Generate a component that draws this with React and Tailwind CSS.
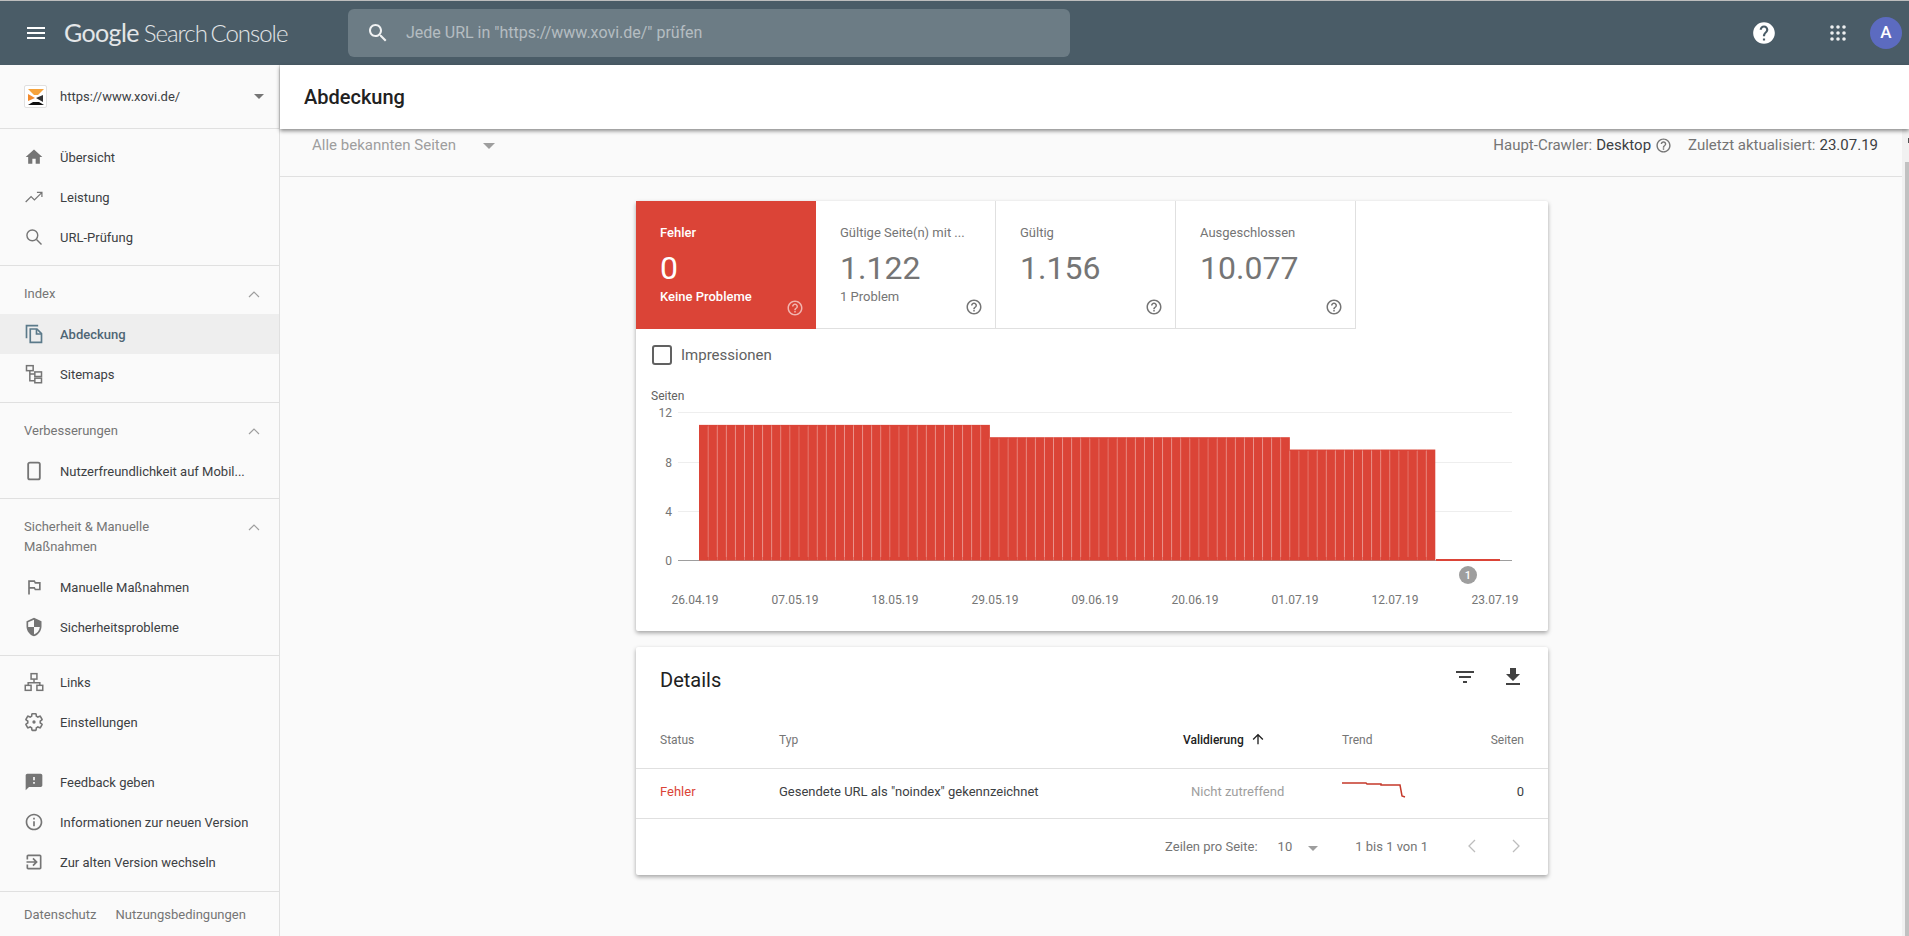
import React from "react";

const Icon = ({ d, className = "w-5 h-5", children }) => (
  <svg viewBox="0 0 24 24" fill="currentColor" className={className}>
    {d && <path d={d} />}
    {children}
  </svg>
);

const paths = {
  menu: "M3 18h18v-2H3v2zm0-5h18v-2H3v2zm0-7v2h18V6H3z",
  search:
    "M15.5 14h-.79l-.28-.27C15.41 12.59 16 11.11 16 9.5 16 5.91 13.09 3 9.5 3S3 5.91 3 9.5 5.91 16 9.5 16c1.61 0 3.09-.59 4.23-1.57l.27.28v.79l5 4.99L20.49 19l-4.99-5zm-6 0C7.01 14 5 11.99 5 9.5S7.01 5 9.5 5 14 7.01 14 9.5 11.99 14 9.5 14z",
  home: "M10 20v-6h4v6h5v-8h3L12 3 2 12h3v8z",
  help: "M12 2C6.48 2 2 6.48 2 12s4.48 10 10 10 10-4.48 10-10S17.52 2 12 2zm1 17h-2v-2h2v2zm2.07-7.75l-.9.92C13.45 12.9 13 13.5 13 15h-2v-.5c0-1.1.45-2.1 1.17-2.83l1.24-1.26c.37-.36.59-.86.59-1.41 0-1.1-.9-2-2-2s-2 .9-2 2H8c0-2.21 1.79-4 4-4s4 1.79 4 4c0 .88-.36 1.68-.93 2.25z",
  helpOutline:
    "M11 18h2v-2h-2v2zm1-16C6.48 2 2 6.48 2 12s4.48 10 10 10 10-4.48 10-10S17.52 2 12 2zm0 18c-4.41 0-8-3.59-8-8s3.59-8 8-8 8 3.59 8 8-3.59 8-8 8zm0-14c-2.21 0-4 1.79-4 4h2c0-1.1.9-2 2-2s2 .9 2 2c0 2-3 1.75-3 5h2c0-2.25 3-2.5 3-5 0-2.21-1.79-4-4-4z",
  flag: "M14 6l-1-2H5v17h2v-7h5l1 2h7V6h-6zm4 8h-4l-1-2H7V6h5l1 2h5v6z",
  shield:
    "M12 1L3 5v6c0 5.55 3.84 10.74 9 12 5.16-1.26 9-6.45 9-12V5l-9-4zm0 10.99h7c-.53 4.12-3.28 7.79-7 8.94V12H5V6.3l7-3.11v8.8z",
  feedback:
    "M20 2H4c-1.1 0-1.99.9-1.99 2L2 22l4-4h14c1.1 0 2-.9 2-2V4c0-1.1-.9-2-2-2zm-7 12h-2v-2h2v2zm0-4h-2V6h2v4z",
  info: "M11 7h2v2h-2zm0 4h2v6h-2zm1-9C6.48 2 2 6.48 2 12s4.48 10 10 10 10-4.48 10-10S17.52 2 12 2zm0 18c-4.41 0-8-3.59-8-8s3.59-8 8-8 8 3.59 8 8-3.59 8-8 8z",
  exit: "M10.09 15.59L11.5 17l5-5-5-5-1.41 1.41L12.67 11H3v2h9.67l-2.58 2.59zM19 3H5c-1.11 0-2 .9-2 2v4h2V5h14v14H5v-4H3v4c0 1.1.89 2 2 2h14c1.1 0 2-.9 2-2V5c0-1.1-.9-2-2-2z",
  filter: "M10 18h4v-2h-4v2zM3 6v2h18V6H3zm3 7h12v-2H6v2z",
  download: "M19 9h-4V3H9v6H5l7 7 7-7zM5 18v2h14v-2H5z",
  up: "M4 12l1.41 1.41L11 7.83V20h2V7.83l5.58 5.59L20 12l-8-8-8 8z",
};

const Trending = () => (
  <svg viewBox="0 0 24 24" fill="none" stroke="currentColor" strokeWidth="1.5" className="w-5 h-5">
    <path d="M2 18l6.5-6.5 4 4L21 7M15.5 6.5H21.5V12" />
  </svg>
);
const Loupe = () => (
  <svg viewBox="0 0 24 24" fill="none" stroke="currentColor" strokeWidth="1.7" className="w-5 h-5">
    <circle cx="10" cy="10" r="6.5" />
    <path d="M15 15l6 6" />
  </svg>
);
const Pages = () => (
  <svg viewBox="0 0 24 24" fill="none" stroke="currentColor" strokeWidth="2" className="w-5 h-5">
    <path d="M17 2H3v15" />
    <path d="M7.5 6h8l5.5 5.5V22H7.5z" />
    <path d="M15 6v6h6" />
  </svg>
);
const Sitemap = () => (
  <svg viewBox="0 0 24 24" fill="none" stroke="currentColor" strokeWidth="1.8" className="w-5 h-5">
    <rect x="3" y="2" width="8" height="6" />
    <rect x="13" y="9.5" width="8" height="5.5" />
    <rect x="13" y="17" width="8" height="5.5" />
    <path d="M7 8v12h6M7 12h6" />
  </svg>
);
const Phone = () => (
  <svg viewBox="0 0 24 24" fill="none" stroke="currentColor" strokeWidth="2.2" className="w-5 h-5">
    <rect x="5" y="2" width="14" height="20" rx="2" />
  </svg>
);
const Links = () => (
  <svg viewBox="0 0 24 24" fill="none" stroke="currentColor" strokeWidth="1.8" className="w-5 h-5">
    <rect x="8.5" y="2" width="7" height="6.5" />
    <rect x="1.5" y="16" width="7" height="6" />
    <rect x="15.5" y="16" width="7" height="6" />
    <path d="M12 8.5V13M5 16v-3h14v3" />
  </svg>
);
const Gear = () => (
  <svg viewBox="0 0 24 24" fill="none" stroke="currentColor" strokeWidth="1.9" className="w-5 h-5">
    <path d="M19.43 12.98c.04-.32.07-.64.07-.98s-.03-.66-.07-.98l2.11-1.65c.19-.15.24-.42.12-.64l-2-3.46c-.12-.22-.39-.3-.61-.22l-2.49 1c-.52-.4-1.08-.73-1.69-.98l-.38-2.65C14.46 2.18 14.25 2 14 2h-4c-.25 0-.46.18-.49.42l-.38 2.65c-.61.25-1.17.59-1.69.98l-2.49-1c-.23-.09-.49 0-.61.22l-2 3.46c-.13.22-.07.49.12.64l2.11 1.65c-.04.32-.07.65-.07.98s.03.66.07.98l-2.11 1.65c-.19.15-.24.42-.12.64l2 3.46c.12.22.39.3.61.22l2.49-1c.52.4 1.08.73 1.69.98l.38 2.65c.03.24.24.42.49.42h4c.25 0 .46-.18.49-.42l.38-2.65c.61-.25 1.17-.59 1.69-.98l2.49 1c.23.09.49 0 .61-.22l2-3.46c.12-.22.07-.49-.12-.64l-2.11-1.65z" />
    <circle cx="12" cy="12" r="2" fill="currentColor" stroke="none" />
  </svg>
);

const Caret = ({ className = "" }) => (
  <span className={`w-0 h-0 border-x-[5px] border-x-transparent border-t-[5px] border-t-[#757575] ${className}`}></span>
);

const ChevronUp = () => (
  <svg viewBox="0 0 14 8" fill="none" stroke="#9e9e9e" strokeWidth="1.2" className="w-[14px] h-2 ml-auto mr-[18px] mt-[6px] shrink-0">
    <path d="M2 7l5-5 5 5" />
  </svg>
);

const NavItem = ({ icon, label, active }) => (
  <div
    className={`flex items-center h-10 text-[13px] ${
      active ? "bg-[#eeeeee] text-[#4f6675] font-medium" : "text-[#3c4043]"
    }`}
  >
    <span className={`w-[60px] pl-6 flex shrink-0 ${active ? "text-[#5b7a8a]" : "text-[#757575]"}`}>{icon}</span>
    <span className="truncate pt-px">{label}</span>
  </div>
);

const SectionHead = ({ label }) => (
  <div className="flex items-start pl-6 pt-[18px] pb-[10px] text-[13px] leading-5 text-[#757575]">
    <span className="w-[190px]">{label}</span>
    <ChevronUp />
  </div>
);

const Sidebar = () => (
  <aside className="w-[280px] shrink-0 border-r border-[#e0e0e0] flex flex-col bg-[#fafafa]">
    <div className="h-[64px] flex items-center pl-6 pr-[15px] border-b border-[#e0e0e0]">
      <span className="w-[23px] h-[23px] bg-white border border-[#e0e0e0] rounded-[2px] flex items-center justify-center">
        <svg viewBox="0 0 18 18" className="w-[18px] h-[18px]">
          <path d="M1 1h16l-6 6H7z" fill="#f5a33c" />
          <path d="M1 6l7 4-7 3z" fill="#f28a2c" />
          <path d="M16 7v7l-7-4z" fill="#333" />
          <path d="M1 17l5-3h6l5 3z" fill="#111" />
        </svg>
      </span>
      <span className="ml-[13px] text-[13px] text-[#3c4043]">https://www.xovi.de/</span>
      <Caret className="ml-auto" />
    </div>

    <div className="py-2 border-b border-[#e0e0e0]">
      <NavItem label="Übersicht" icon={<Icon d={paths.home} />} />
      <NavItem label="Leistung" icon={<Trending />} />
      <NavItem label="URL-Prüfung" icon={<Loupe />} />
    </div>

    <div className="pb-2 border-b border-[#e0e0e0]">
      <SectionHead label="Index" />
      <NavItem active label="Abdeckung" icon={<Pages />} />
      <NavItem label="Sitemaps" icon={<Sitemap />} />
    </div>

    <div className="pb-[7px] border-b border-[#e0e0e0]">
      <SectionHead label="Verbesserungen" />
      <NavItem label="Nutzerfreundlichkeit auf Mobil..." icon={<Phone />} />
    </div>

    <div className="pb-2 border-b border-[#e0e0e0]">
      <SectionHead label="Sicherheit & Manuelle Maßnahmen" />
      <NavItem label="Manuelle Maßnahmen" icon={<Icon d={paths.flag} />} />
      <NavItem label="Sicherheitsprobleme" icon={<Icon d={paths.shield} />} />
    </div>

    <div className="pt-[6px] pb-[9px] border-b border-[#e0e0e0]">
      <NavItem label="Links" icon={<Links />} />
      <NavItem label="Einstellungen" icon={<Gear />} />
      <div className="h-5"></div>
      <NavItem label="Feedback geben" icon={<Icon d={paths.feedback} />} />
      <NavItem label="Informationen zur neuen Version" icon={<Icon d={paths.info} />} />
      <NavItem label="Zur alten Version wechseln" icon={<Icon d={paths.exit} />} />
    </div>

    <div className="flex gap-[19px] pl-6 pt-[13px] text-[13px] leading-5 text-[#757575]">
      <span>Datenschutz</span>
      <span>Nutzungsbedingungen</span>
    </div>
  </aside>
);

const Tile = ({ label, value, sub, active }) => (
  <div
    className={`relative w-[180px] h-[128px] pl-6 pt-[22px] ${
      active ? "bg-[#db4437] text-white" : "border-r border-b border-[#e0e0e0] text-[#757575]"
    }`}
  >
    <div className={`text-[13px] leading-5 ${active ? "font-medium" : ""}`}>{label}</div>
    <div className="mt-[5px] text-[32px] leading-10">{value}</div>
    <div className={`text-[13px] leading-[18px] ${active ? "font-medium" : ""}`}>{sub}</div>
    <span className={`absolute right-[12px] bottom-[12px] ${active ? "text-white/60" : "text-[#757575]"}`}>
      <Icon d={paths.helpOutline} className="w-[18px] h-[18px]" />
    </span>
  </div>
);

// 88 daily bars, pitch taken from the tick labels
const PITCH = 9.09;
const bars = Array.from({ length: 88 }, (_, i) => (i < 32 ? 11 : i < 65 ? 10 : i < 81 ? 9 : 0));
const ticks = ["26.04.19", "07.05.19", "18.05.19", "29.05.19", "09.06.19", "20.06.19", "01.07.19", "12.07.19", "23.07.19"];
const yAxis = [
  [12, 31],
  [8, 81],
  [4, 130],
  [0, 179],
];

const Chart = () => (
  <svg viewBox="0 0 912 250" className="block w-[912px] h-[250px]" fontFamily="Roboto, sans-serif">
    <text x="15" y="19" fontSize="12" fill="#616161">Seiten</text>
    {yAxis.map(([v, y]) => (
      <g key={v}>
        <line x1="42" x2="876" y1={y + 0.5} y2={y + 0.5} stroke={v === 0 ? "#9e9e9e" : "#eeeeee"} />
        <text x="36" y={y + 4.5} fontSize="12" fill="#757575" textAnchor="end">{v}</text>
      </g>
    ))}
    {bars.map((v, i) =>
      v > 0 ? (
        <g key={i}>
          <rect x={63 + i * PITCH} y={179.5 - v * 12.33} width={PITCH} height={v * 12.33} fill="#db4437" />
          {i > 0 && (
            <line x1={63 + i * PITCH} x2={63 + i * PITCH} y1={181 - v * 12.33} y2="176" stroke="#fff" strokeOpacity="0.3" strokeWidth="0.8" />
          )}
        </g>
      ) : null
    )}
    <rect x="800" y="178" width="64" height="2" fill="#db4437" />
    <circle cx="832" cy="194" r="9" fill="#9e9e9e" />
    <text x="832" y="198" fontSize="11" fontWeight="500" fill="#fff" textAnchor="middle">1</text>
    {ticks.map((t, i) => (
      <text key={t} x={59 + i * 100} y="223" fontSize="12" fill="#757575" textAnchor="middle">{t}</text>
    ))}
  </svg>
);

const Spark = () => (
  <svg viewBox="0 0 64 16" fill="none" stroke="#c5392a" strokeWidth="1.5" className="w-16 h-4 -mt-[4px]">
    <path d="M0 1h24l1 1h14v1h19l2 11 3 1" />
  </svg>
);

const Details = () => (
  <section className="mt-4 bg-white rounded-[2px] shadow-[0_2px_4px_rgba(0,0,0,0.35)]">
    <div className="h-[65px] flex items-center pl-6 pr-[23px] text-[#212121]">
      <h2 className="text-[20px]">Details</h2>
      <span className="ml-auto -mt-[6px] text-[#424242]"><Icon d={paths.filter} className="w-6 h-6" /></span>
      <span className="ml-[24px] -mt-[6px] text-[#424242]"><Icon d={paths.download} className="w-6 h-6" /></span>
    </div>
    <div className="h-[57px] grid grid-cols-[119px_404px_159px_1fr_auto] items-center px-6 text-xs text-[#757575] border-b border-[#e0e0e0]">
      <span>Status</span>
      <span>Typ</span>
      <span className="flex items-center font-medium text-[#212121]">
        Validierung
        <Icon d={paths.up} className="w-4 h-4 ml-[6px] -mt-[3px]" />
      </span>
      <span>Trend</span>
      <span>Seiten</span>
    </div>
    <div className="h-[50px] pb-[3px] grid grid-cols-[119px_404px_159px_1fr_auto] items-center px-6 text-[13px] border-b border-[#e0e0e0]">
      <span className="text-[#db4437]">Fehler</span>
      <span className="text-[#3c4043]">Gesendete URL als "noindex" gekennzeichnet</span>
      <span className="pl-2 text-[#9e9e9e]">Nicht zutreffend</span>
      <Spark />
      <span className="text-[#3c4043]">0</span>
    </div>
    <div className="h-[56px] flex items-center justify-end pr-[27px] text-[13px] text-[#757575]">
      <span>Zeilen pro Seite:</span>
      <span className="ml-5">10</span>
      <Caret className="ml-4 mt-[3px] !border-t-[#9e9e9e]" />
      <span className="ml-[37px]">1 bis 1 von 1</span>
      <svg viewBox="0 0 10 16" fill="none" stroke="#bdbdbd" strokeWidth="1.3" className="w-[10px] h-4 ml-[39px] -mt-[3px]">
        <path d="M8 2L2 8l6 6" />
      </svg>
      <svg viewBox="0 0 10 16" fill="none" stroke="#bdbdbd" strokeWidth="1.3" className="w-[10px] h-4 ml-[34px] -mt-[3px]">
        <path d="M2 2l6 6-6 6" />
      </svg>
    </div>
  </section>
);

export default function App() {
  return (
    <div className="h-[936px] w-full overflow-hidden flex flex-col bg-[#fafafa] font-['Roboto',sans-serif]">
      <header className="h-[65px] shrink-0 border-t border-[#bdbdbd] bg-[#4a5c67] flex items-center text-white">
        <span className="ml-6 w-6 flex"><Icon d={paths.menu} className="w-6 h-6" /></span>
        <span className="ml-[16px] w-[284px] text-[25px] tracking-[-0.6px] [word-spacing:-1px] font-['Lato',sans-serif] text-white/85 whitespace-nowrap">
          Google <span className="font-light text-[24px] tracking-[-1px] [word-spacing:-2px]">Search Console</span>
        </span>
        <div className="w-[722px] h-[48px] rounded-[6px] bg-[#6c7c85] flex items-center">
          <span className="ml-[18px] flex text-white/90"><Icon d={paths.search} className="w-6 h-6" /></span>
          <span className="ml-[16px] text-[16px] text-white/50 whitespace-nowrap">Jede URL in "https://www.xovi.de/" prüfen</span>
        </div>
        <span className="ml-auto flex"><Icon d={paths.help} className="w-[26px] h-[26px]" /></span>
        <span className="ml-[53px] flex">
          <svg viewBox="0 0 16 16" className="w-4 h-4 fill-white/90">
            {[2, 8, 14].map((y) => [2, 8, 14].map((x) => <circle key={`${x}-${y}`} cx={x} cy={y} r="1.8" />))}
          </svg>
        </span>
        <span className="ml-[24px] mr-[7px] w-8 h-8 rounded-full bg-[#5c6bc0] flex items-center justify-center text-[17px] font-medium">A</span>
      </header>

      <div className="flex-1 flex min-h-0">
        <Sidebar />
        <main className="relative flex-1 flex flex-col min-w-0">
          <div className="relative z-10 h-[64px] shrink-0 bg-white flex items-center pl-6 text-[20px] font-medium text-[#212121] shadow-[0_2px_4px_rgba(0,0,0,0.45)]">
            Abdeckung
          </div>
          <div className="flex-1 flex min-h-0">
            <div className="flex-1 min-w-0 flex flex-col">
              <div className="h-[48px] shrink-0 flex items-center border-b border-[#e0e0e0] text-[15px] pb-[14px]">
                <span className="ml-[32px] text-[#9e9e9e]">Alle bekannten Seiten</span>
                <Caret className="ml-[27px] !border-t-[#9e9e9e] !border-x-[6px] !border-t-[6px]" />
                <span className="ml-auto text-[#757575]">Haupt-Crawler:</span>
                <span className="ml-1 text-[#3c4043]">Desktop</span>
                <span className="ml-[4px] text-[#757575] flex"><Icon d={paths.helpOutline} className="w-[17px] h-[17px]" /></span>
                <span className="ml-4 text-[#757575]">Zuletzt aktualisiert:</span>
                <span className="ml-1 mr-[24px] text-[#3c4043]">23.07.19</span>
              </div>
              <div className="flex-1 flex flex-col items-center pt-6 pl-[2px]">
                <div className="w-[912px]">
                  <section className="bg-white rounded-[2px] shadow-[0_2px_4px_rgba(0,0,0,0.35)]">
                    <div className="flex">
                      <Tile active label="Fehler" value="0" sub="Keine Probleme" />
                      <Tile label="Gültige Seite(n) mit ..." value="1.122" sub="1 Problem" />
                      <Tile label="Gültig" value="1.156" />
                      <Tile label="Ausgeschlossen" value="10.077" />
                    </div>
                    <div className="h-[52px] flex items-center pl-4 text-[15px] text-[#616161]">
                      <span className="w-5 h-5 border-2 border-[#616161] rounded-[3px]"></span>
                      <span className="ml-[9px]">Impressionen</span>
                    </div>
                    <Chart />
                  </section>
                  <Details />
                </div>
              </div>
            </div>
            {/* scrollbar */}
            <div className="w-[7px] shrink-0 bg-[#f1f1f1] flex flex-col items-end pt-[9px]">
              <div className="w-px h-[5px] bg-[#505050]"></div>
              <div className="mt-[19px] w-1 flex-1 bg-[#c1c1c1]"></div>
            </div>
          </div>
        </main>
      </div>
    </div>
  );
}
